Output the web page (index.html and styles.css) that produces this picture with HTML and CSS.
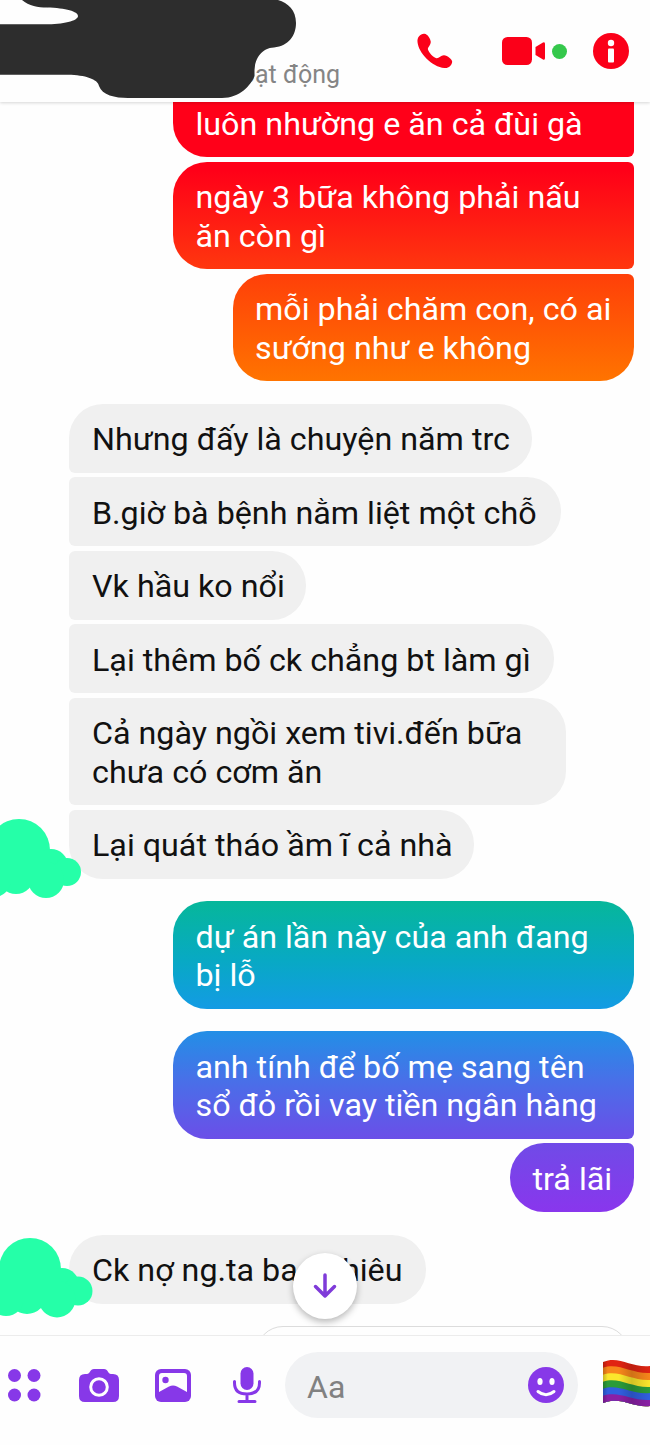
FILE: index.html
```html
<!DOCTYPE html>
<html lang="vi">
<head>
<meta charset="utf-8">
<title>Tin nhắn</title>
<link rel="stylesheet" href="styles.css">
</head>
<body>
<div class="app">
  <header class="header">
    <span class="status">Đang hoạt động</span>
    <svg class="scribble" viewBox="0 0 300 100" aria-hidden="true"><path d="M22 0C29 6 38 7.500 47 7.500C66 8 78 11.500 78 16C78 21 63 24.300 45 24.300H0V74.700H68C85 75 98 79 99 86C102 95 115 98 128 98H222C240 98 251 85 254.500 76V70C255 58 262 48 274 47.500C289 46 296 35 296 23C296 10 288 3 278 0Z"/></svg>
    <svg class="icon call" viewBox="0 0 36 36"><path d="M.500 9C0 4 3.500.300 7.500.700C10.500 1 13.500 5.500 13.800 9C13.800 12 10.800 14 10.800 16C11.500 19.500 16.500 24.500 19.500 25.200C22 25.500 24 22 27 22.200C30.500 22.600 35.200 26 35.200 28.800C34.800 32.500 31.500 35.500 27.500 35C15 34 1.500 20 .500 9Z"/></svg>
    <svg class="icon video" viewBox="0 0 44 28"><rect width="30" height="28" rx="5.500"/><path d="M33.500 10L41 5.500Q43 4.500 43 7V21Q43 23.500 41 22.500L33.500 18Z"/></svg>
    <i class="online"></i>
    <svg class="icon info" viewBox="0 0 36 36"><circle cx="18" cy="18" r="18"/><circle class="cut" cx="18" cy="10" r="3.200"/><rect class="cut" x="15" y="15.500" width="6" height="14" rx="1"/></svg>
  </header>

  <main class="chat">
    <div class="thread">
      <section class="group out">
        <p class="bubble wide red"><span class="lead"></span>luôn nhường e ăn cả đùi gà</p>
        <p class="bubble wide scarlet">ngày 3 bữa không phải nấu<br>ăn còn gì</p>
        <p class="bubble medium orange">mỗi phải chăm con, có ai<br>sướng như e không</p>
      </section>
      <section class="group in">
        <p class="bubble w463">Nhưng đấy là chuyện năm trc</p>
        <p class="bubble w492">B.giờ bà bệnh nằm liệt một chỗ</p>
        <p class="bubble w237">Vk hầu ko nổi</p>
        <p class="bubble w485">Lại thêm bố ck chẳng bt làm gì</p>
        <p class="bubble w497">Cả ngày ngồi xem tivi.đến bữa<br>chưa có cơm ăn</p>
        <p class="bubble w405">Lại quát tháo ầm ĩ cả nhà</p>
        <svg class="cloud" viewBox="-20 0 102 82" aria-hidden="true"><circle cx="19" cy="31" r="31"/><circle cx="51" cy="47" r="17"/><circle cx="67" cy="53" r="14"/><circle cx="46" cy="61" r="18"/><circle cx="16" cy="57" r="18"/><circle cx="-6" cy="61" r="17"/><rect x="-10" y="35" width="60" height="30"/></svg>
      </section>
      <section class="group out">
        <p class="bubble wide teal">dự án lần này của anh đang<br>bị lỗ</p>
      </section>
      <section class="group out">
        <p class="bubble wide blue">anh tính để bố mẹ sang tên<br>sổ đỏ rồi vay tiền ngân hàng</p>
        <p class="bubble short purple">trả lãi</p>
      </section>
      <section class="group in">
        <p class="bubble w356">Ck nợ ng.ta bao nhiêu</p>
        <svg class="cloud second" viewBox="-20 0 102 82" aria-hidden="true"><circle cx="19" cy="31" r="31"/><circle cx="51" cy="47" r="17"/><circle cx="67" cy="53" r="14.500"/><circle cx="46" cy="61" r="18.500"/><circle cx="16" cy="57" r="19"/><circle cx="-5" cy="60" r="18"/><path d="M-12 31H50V65H-12Z"/></svg>
      </section>
      <div class="card"></div>
    </div>
    <div class="jump"><svg viewBox="0 0 24 28"><path d="M12 3V24M2.500 14.500L12 24L21.500 14.500"/></svg></div>
  </main>

  <footer class="composer">
    <svg class="tool dots" viewBox="0 0 33 33"><circle cx="6.500" cy="6.500" r="6.500"/><circle cx="26" cy="6.500" r="6.500"/><circle cx="6.500" cy="26" r="6.500"/><circle cx="26" cy="26" r="6.500"/></svg>
    <svg class="tool camera" viewBox="0 0 40 33"><path d="M6 5H8C11 5 11 0 15 0H25C29 0 29 5 32 5H34Q40 5 40 11V27Q40 33 34 33H6Q0 33 0 27V11Q0 5 6 5Z"/><circle class="ring" cx="20" cy="18" r="8.300"/></svg>
    <svg class="tool photo" viewBox="0 0 36 33"><rect width="36" height="33" rx="6"/><path class="cut" d="M4 7Q4 4 7 4H29Q32 4 32 7V23L22 17.500Q18 15.500 14 17.500L4 23Z"/><circle cx="10.500" cy="11" r="3.200"/></svg>
    <svg class="tool mic" viewBox="0 0 28 36"><rect x="7.500" width="13" height="23" rx="6.500"/><path class="line" d="M1.500 14.500V16Q1.500 27 14 27Q26.500 27 26.500 16V14.500M14 27V34M6 34.500H22"/></svg>
    <div class="input"><span>Aa</span><svg class="smile" viewBox="0 0 36 36"><circle cx="18" cy="18" r="18"/><ellipse class="cut" cx="12" cy="14.500" rx="2.600" ry="3.600"/><ellipse class="cut" cx="24" cy="14.500" rx="2.600" ry="3.600"/><path class="mouth" d="M10 24.500Q18 31 26 24.500"/></svg></div>
    <svg class="flag" viewBox="0 0 48 50">
      <defs>
        <linearGradient id="fold"><stop offset="0" stop-opacity=".25"/><stop offset=".12" stop-opacity="0"/><stop offset=".35" stop-opacity="0"/><stop offset=".62" stop-opacity=".16"/><stop offset="1" stop-opacity="0"/></linearGradient>
        <clipPath id="wave"><path d="M1 4C17-3 29 10 48 8V48C30 50 20 38 1 45Z"/></clipPath>
      </defs>
      <g clip-path="url(#wave)">
        <rect class="f1" width="48" height="50"/>
        <path class="f2" d="M0 10C17 4 29 16 48 15V50H0Z"/>
        <path class="f3" d="M0 17C17 11 29 23 48 22V50H0Z"/>
        <path class="f4" d="M0 24C17 18 29 30 48 29V50H0Z"/>
        <path class="f5" d="M0 31C17 25 29 37 48 35V50H0Z"/>
        <path class="f6" d="M0 38C17 32 29 43 48 42V50H0Z"/>
        <rect fill="url(#fold)" width="48" height="50"/>
      </g>
    </svg>
  </footer>
</div>
</body>
</html>
```
FILE: styles.css
```css
* { box-sizing: border-box; }
body { margin: 0; background: #fefefe; font-family: Roboto, "Noto Sans", sans-serif; }
.app { width: 650px; height: 1445px; display: flex; flex-direction: column; overflow: hidden; }

.header {
  position: relative; z-index: 2; flex: none; height: 102px;
  display: flex; align-items: center; background: #fefefe;
  box-shadow: 0 1px 3px rgba(0, 0, 0, .16);
}
.status { width: 340px; text-align: right; font-size: 25px; line-height: 30px; padding-top: 48px; color: #858585; white-space: nowrap; }
.scribble { position: absolute; left: 0; top: 0; width: 300px; height: 100px; fill: #2d2d2d; }
.icon { flex: none; fill: #fb0019; }
.call { width: 36px; height: 36px; margin-left: 77px; }
.video { width: 44px; height: 28px; margin-left: 49px; }
.online { width: 15px; height: 15px; margin-left: 6px; border-radius: 50%; background: #35c84c; }
.info { width: 36px; height: 36px; margin-left: 26px; }
.cut { fill: #fefefe; }

.chat { position: relative; flex: none; height: 1234px; overflow: hidden; border-bottom: 1px solid #ececec; }
.thread { margin-top: -52.100px; padding: 0 16px 0 69px; display: flex; flex-direction: column; gap: 22.600px; }
.group { position: relative; display: flex; flex-direction: column; gap: 4.500px; }
.out { align-items: flex-end; }
.in { align-items: flex-start; }
.bubble { margin: 0; padding: 16.500px 0 14.100px 23px; font-size: 32.250px; line-height: 38.400px; white-space: nowrap; }
.out .bubble { padding-left: 22.500px; color: #fff; border-radius: 34px 6px 6px 34px; }
.out .bubble:first-child { border-top-right-radius: 34px; }
.out .bubble:last-child { border-bottom-right-radius: 34px; }
.in .bubble { color: #111; background: #f0f0f0; border-radius: 6px 34px 34px 6px; }
.in .bubble:first-of-type { border-top-left-radius: 34px; }
.in .bubble:last-of-type { border-bottom-left-radius: 34px; }
.lead { display: block; height: 38.400px; }
.wide { width: 461px; }
.medium { width: 401.500px; }
.short { width: 124px; }
.w463 { width: 463px; }
.w492 { width: 492px; }
.w237 { width: 237px; }
.w485 { width: 485px; }
.w497 { width: 497px; }
.w405 { width: 405px; }
.w356 { width: 357px; }
.red { background: #ff0019; }
.scarlet { background: linear-gradient(#ff0018 8%, #ff370e); }
.orange { background: linear-gradient(#ff3f09, #ff7400); }
.teal { background: linear-gradient(#06b79a, #08a9c4 55%, #139be4); }
.blue { background: linear-gradient(#228fe6, #4870e8 45%, #6b4ee8); }
.purple { background: linear-gradient(#704be7, #8936ed); }
.cloud { position: absolute; left: -89px; bottom: -22px; width: 102px; height: 82px; fill: #25ffa8; }
.cloud.second { left: -78.500px; bottom: -16px; }
.card { width: 373px; height: 70px; margin-left: 187px; border: 1.500px solid #dcdcdc; border-radius: 27px; }
.jump {
  position: absolute; left: 293px; top: 1151px; width: 64px; height: 66px;
  display: grid; place-items: center; border-radius: 50%; background: #fff;
  box-shadow: 0 3px 7px rgba(0, 0, 0, .28);
}
.jump svg { width: 24px; height: 28px; fill: none; stroke: #7f3bd9; stroke-width: 3.500; stroke-linecap: round; stroke-linejoin: round; }

.composer { flex: 1; display: flex; align-items: flex-start; padding: 16px 0 0 8px; overflow: hidden; }
.tool { flex: none; fill: #8738e8; margin-top: 17px; }
.dots { width: 33px; height: 33px; }
.camera { width: 40px; height: 33px; margin-left: 38px; }
.photo { width: 36px; height: 33px; margin-left: 36px; }
.mic { width: 28px; height: 36px; margin: 15px 0 0 42px; }
.ring { fill: #8738e8; stroke: #fefefe; stroke-width: 3; }
.line { fill: none; stroke: #8738e8; stroke-width: 3; stroke-linecap: round; }
.input {
  flex: none; width: 293px; height: 66px; margin-left: 24px; padding: 0 14px 0 22px;
  display: flex; align-items: center; justify-content: space-between;
  border-radius: 33px; background: #f1f2f4; color: #818181; font-size: 32px;
}
.input span { padding-top: 4px; }
.smile { width: 36px; height: 36px; fill: #8738e8; }
.mouth { fill: none; stroke: #fefefe; stroke-width: 3; stroke-linecap: round; }
.flag { flex: none; width: 48px; height: 50px; margin: 6px 0 0 24px; }
.f1 { fill: #e02412; }
.f2 { fill: #f7861b; }
.f3 { fill: #fbe62c; }
.f4 { fill: #2b9b3a; }
.f5 { fill: #315fe0; }
.f6 { fill: #8a1fa5; }
```
